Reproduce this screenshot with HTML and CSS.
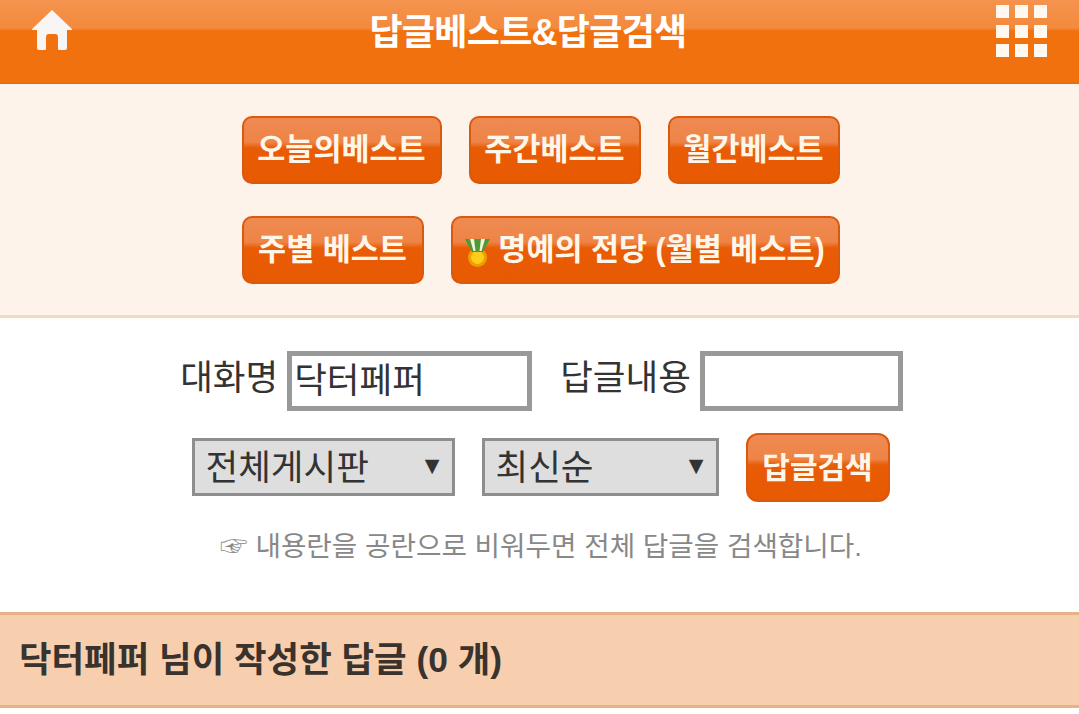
FILE: index.html
```html
<!DOCTYPE html>
<html lang="ko">
<head>
    <meta charset="UTF-8">
    <meta name="viewport" content="width=device-width, initial-scale=1.0">
    <title>답글베스트&amp;답글검색</title>
    <link rel="stylesheet" href="styles.css">
</head>
<body>
    <header class="topbar">
        <svg class="home-icon" viewBox="0 0 40 40" width="40" height="40">
            <path fill="#f8f6f4" d="M20 0 L40 19 Q40.500 20 39 20 L35 20 L35 38 Q35 40 33 40 L27 40 Q26 40 26 39 L26 27 Q26 24 23 24 L17 24 Q14 24 14 27 L14 39 Q14 40 13 40 L7 40 Q5 40 5 38 L5 20 L1 20 Q-0.500 20 0 19 Z"/>
        </svg>
        <h1 class="topbar-title">답글베스트&amp;답글검색</h1>
        <div class="menu-grid">
            <span></span><span></span><span></span>
            <span></span><span></span><span></span>
            <span></span><span></span><span></span>
        </div>
    </header>

    <section class="best-panel">
        <div class="btn-row">
            <a class="btn btn-today">오늘의베스트</a>
            <a class="btn btn-week">주간베스트</a>
            <a class="btn btn-month">월간베스트</a>
        </div>
        <div class="btn-row">
            <a class="btn btn-weekly">주별 베스트</a>
            <a class="btn btn-fame">
                <svg class="medal" viewBox="0 0 26 28" width="26" height="28">
                    <circle cx="12.500" cy="18.500" r="9.500" fill="#eda000"/>
                    <circle cx="12.500" cy="18.500" r="6.500" fill="#ffcc1c"/>
                    <path fill="#4f9a38" d="M0 0 H25 L18 13 H7 Z"/>
                    <path fill="#f2f5dc" d="M5 0 H9 L10.500 12 H8.500 Z M16 0 H20 L16.500 12 H14.500 Z"/>
                </svg>
                명예의 전당 (월별 베스트)
            </a>
        </div>
    </section>

    <section class="search-panel">
        <div class="search-row input-row">
            <label class="field-label">대화명</label>
            <input class="text-input nick-input" type="text" value="닥터페퍼">
            <label class="field-label content-label">답글내용</label>
            <input class="text-input content-input" type="text">
        </div>
        <div class="search-row select-row">
            <div class="fake-select board-select">전체게시판<span class="arrow">▼</span></div>
            <div class="fake-select order-select">최신순<span class="arrow">▼</span></div>
            <a class="btn btn-search">답글검색</a>
        </div>
        <p class="hint">☞ 내용란을 공란으로 비워두면 전체 답글을 검색합니다.</p>
    </section>

    <section class="result-head">닥터페퍼 님이 작성한 답글 (0 개)</section>
</body>
</html>
```

FILE: styles.css
```css
html, body {
    margin: 0;
    padding: 0;
}

body {
    font-family: "Liberation Sans", "Noto Sans CJK KR", sans-serif;
    background-color: #ffffff;
    color: #333333;
    height: 714px;
    overflow: hidden;
}

/* top bar */
.topbar {
    height: 84px;
    box-sizing: border-box;
    display: flex;
    justify-content: space-between;
    padding: 10px 32px 0 32px;
    position: relative;
    background: linear-gradient(#f5934f, #f38a3c 28px, #f1710f 31px, #f1710f 82px, #c96f2b 84px);
}

.home-icon {
    display: block;
}

.topbar-title {
    position: absolute;
    left: 0;
    right: 23px;
    top: 11px;
    margin: 0;
    text-align: center;
    color: #ffffff;
    font-size: 36px;
    line-height: 44px;
    font-weight: bold;
    letter-spacing: -0.700px;
}

.menu-grid {
    display: grid;
    grid-template-columns: repeat(3, 13px);
    grid-auto-rows: 13px;
    gap: 6.500px 6px;
    margin-top: -5px;
    margin-left: auto;
}

.menu-grid span {
    background-color: #fff8f0;
}

/* best buttons */
.best-panel {
    height: 234px;
    box-sizing: border-box;
    background-color: #fdf3ea;
    border-bottom: 3px solid #f5d9bd;
    padding: 32px 0 0 2px;
}

.btn-row {
    display: flex;
    justify-content: center;
    gap: 27px;
    margin-bottom: 32px;
}

.btn {
    display: flex;
    align-items: center;
    justify-content: center;
    box-sizing: border-box;
    height: 68px;
    padding-bottom: 6px;
    border: 2px solid #d9590e;
    border-radius: 10px;
    color: #fff6ea;
    font-size: 30.500px;
    font-weight: bold;
    background: linear-gradient(#ef8a52, #ee8446 24px, #e85c05 30px, #e85a02);
    white-space: nowrap;
}

.btn-today { width: 200px; }
.btn-week { width: 172px; }
.btn-month { width: 172px; }
.btn-weekly { width: 182px; }
.btn-fame { width: 389px; gap: 7px; }

.medal {
    flex: none;
    margin-top: 12px;
}

/* search */
.search-panel {
    height: 294px;
    box-sizing: border-box;
    padding-top: 33px;
}

.search-row {
    display: flex;
    justify-content: center;
    align-items: center;
    height: 60px;
}

.input-row {
    padding-left: 4px;
}

.field-label {
    font-size: 35.500px;
    margin-right: 9px;
    margin-top: -13px;
}

.content-label {
    margin-left: 28px;
    margin-right: 9px;
}

.text-input {
    box-sizing: border-box;
    height: 60px;
    border: 5px solid #999999;
    border-radius: 0;
    background-color: #ffffff;
    color: #333333;
    font-family: inherit;
    font-size: 35.500px;
    padding: 0 0 7px 2px;
    outline: none;
}

.nick-input { width: 245px; }
.content-input { width: 203px; }

.select-row {
    margin-top: 22px;
    height: 69px;
    gap: 27px;
    padding-left: 2px;
}

.fake-select {
    box-sizing: border-box;
    height: 58px;
    margin-bottom: 2px;
    border: 3px solid #8e8e8e;
    background-color: #dedede;
    font-size: 35.500px;
    display: flex;
    align-items: center;
    justify-content: space-between;
    padding: 0 7px 5px 11px;
    color: #333333;
}

.board-select { width: 263px; }
.order-select { width: 237px; }

.arrow {
    font-size: 25px;
    margin-top: 3px;
    color: #333333;
}

.btn-search {
    width: 144px;
    height: 69px;
    font-size: 30px;
    border-radius: 12px;
}

.hint {
    margin: 25px 0 0 0;
    padding-left: 3px;
    text-align: center;
    font-size: 27.700px;
    line-height: 40px;
    color: #888888;
}

/* result heading */
.result-head {
    height: 96px;
    box-sizing: border-box;
    background-color: #f7ceae;
    border-top: 3px solid #e8b188;
    border-bottom: 3px solid #e8b188;
    padding-left: 19px;
    font-size: 35.400px;
    font-weight: bold;
    line-height: 90px;
    color: #3a322c;
}
```
